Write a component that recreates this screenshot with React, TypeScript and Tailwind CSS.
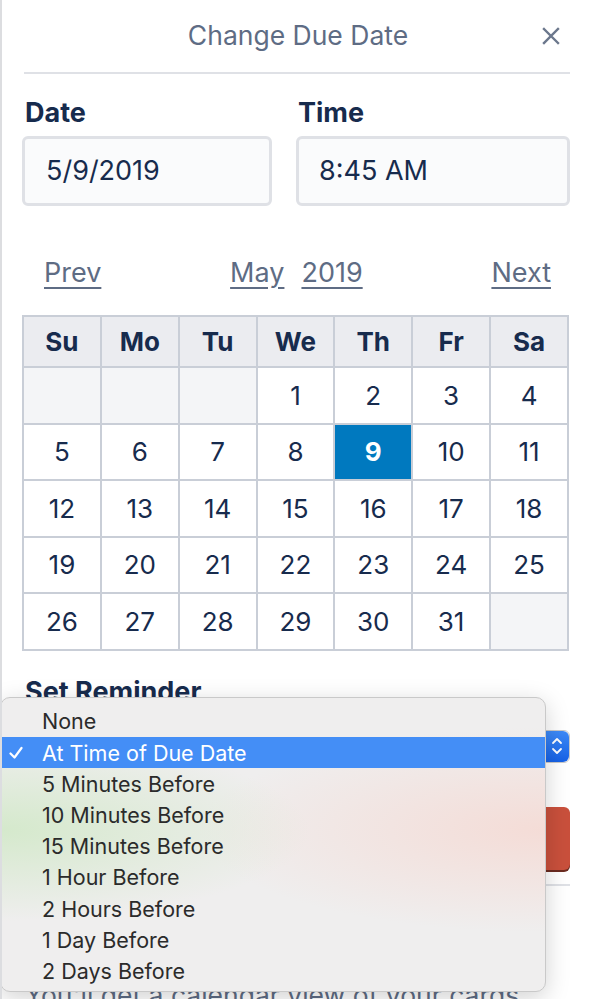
import React from "react";

const weeks: (number | null)[][] = [
  [null, null, null, 1, 2, 3, 4],
  [5, 6, 7, 8, 9, 10, 11],
  [12, 13, 14, 15, 16, 17, 18],
  [19, 20, 21, 22, 23, 24, 25],
  [26, 27, 28, 29, 30, 31, null],
];

const days = ["Su", "Mo", "Tu", "We", "Th", "Fr", "Sa"];

const options = [
  "None",
  "At Time of Due Date",
  "5 Minutes Before",
  "10 Minutes Before",
  "15 Minutes Before",
  "1 Hour Before",
  "2 Hours Before",
  "1 Day Before",
  "2 Days Before",
];

export default function App() {
  return (
    <div
      className="relative w-[592px] h-[999px] overflow-hidden bg-white border-l-2 border-[#dcdde0]"
      style={{ fontFamily: "Inter, 'Noto Sans', sans-serif" }}
    >
      <div className="pl-[20px] pr-[22px]">
        {/* Header */}
        <div className="grid grid-cols-[1fr_auto_1fr] items-center h-[74px] border-b-2 border-[#dfe1e6] ml-[2px]">
          <div />
          <div className="text-[26.5px] text-[#5e6c84] pl-[2px]">Change Due Date</div>
          <div className="flex justify-end pr-[10px]">
            <svg width="18" height="18" viewBox="0 0 18 18">
              <path d="M2 2 L16 16 M16 2 L2 16" stroke="#6b778c" strokeWidth="2.4" strokeLinecap="square" />
            </svg>
          </div>
        </div>

        {/* Date/Time */}
        <div className="grid grid-cols-[250px_1fr] gap-[24px] mt-[24px]">
          <div>
            <div className="text-[27px] font-bold text-[#172b4d] leading-[30px] pl-[3px]">Date</div>
            <div className="mt-[8px] h-[70px] rounded-[6px] border-[3px] border-[#dfe1e6] bg-[#fafbfc] flex items-center pl-[21px] text-[27px] text-[#172b4d]">
              5/9/2019
            </div>
          </div>
          <div>
            <div className="text-[27px] font-bold text-[#172b4d] leading-[30px] pl-[2px]">Time</div>
            <div className="mt-[8px] h-[70px] rounded-[6px] border-[3px] border-[#dfe1e6] bg-[#fafbfc] flex items-center pl-[20px] text-[27px] text-[#172b4d]">
              8:45 AM
            </div>
          </div>
        </div>

        {/* Month nav */}
        <div className="mt-[52px] flex items-center justify-between pl-[22px] pr-[19px] h-[30px] text-[27px] text-[#5e6c84]">
          <span className="underline underline-offset-[5px]">Prev</span>
          <span className="flex gap-[17px]">
            <span className="underline underline-offset-[5px]">May</span>
            <span className="underline underline-offset-[5px]">2019</span>
          </span>
          <span className="underline underline-offset-[5px]">Next</span>
        </div>

        {/* Calendar */}
        <table className="mt-[27px] w-[547px] border-collapse table-fixed text-[#172b4d]">
          <thead>
            <tr>
              {days.map((d) => (
                <th
                  key={d}
                  className="h-[51px] border-2 border-[#c9ced7] bg-[#ebecf0] text-[26px] font-bold text-center"
                >
                  {d}
                </th>
              ))}
            </tr>
          </thead>
          <tbody>
            {weeks.map((w, i) => (
              <tr key={i}>
                {w.map((d, j) => (
                  <td
                    key={j}
                    className={
                      "h-[56.5px] border-2 border-[#c9ced7] text-center text-[26px] " +
                      (d === null
                        ? "bg-[#f4f5f7]"
                        : d === 9
                        ? "bg-[#0079bf] text-white font-bold"
                        : "bg-white")
                    }
                  >
                    {d ?? ""}
                  </td>
                ))}
              </tr>
            ))}
          </tbody>
        </table>

        {/* Reminder */}
        <div className="mt-[26px] text-[27px] font-bold text-[#172b4d] leading-[30px] pl-[3px]">Set Reminder</div>
        <div className="mt-[23px] h-[33px] flex rounded-[6px] border border-[#c8c8c8] bg-white ml-[2px]">
          <div className="flex-1 pl-[16px] flex items-center text-[18px] text-[#222]">At Time of Due Date</div>
          <div className="w-[24px] h-full rounded-r-[6px] bg-gradient-to-b from-[#3d8af7] to-[#1661e6] flex items-center justify-center">
            <svg width="12" height="22" viewBox="0 0 12 22">
              <path d="M2 8 L6 4 L10 8 M2 14 L6 18 L10 14" stroke="white" strokeWidth="1.8" fill="none" strokeLinecap="round" strokeLinejoin="round" />
            </svg>
          </div>
        </div>

        {/* Buttons */}
        <div className="mt-[44px] flex justify-between ml-[2px]">
          <div className="h-[63px] w-[130px] rounded-[6px] bg-[#5aac44] shadow-[0_2px_0_#3f6f21] text-white text-[24px] font-bold flex items-center justify-center">
            Save
          </div>
          <div className="h-[63px] w-[150px] rounded-[6px] bg-[#c9503c] shadow-[0_2px_0_#6b2b20] text-white text-[24px] font-bold flex items-center justify-center">
            Remove
          </div>
        </div>

        <div className="mt-[14px] border-b-2 border-[#dfe1e6] ml-[2px]" />

        <div className="mt-[90px] text-[26.5px] text-[#5e6c84] pl-[3px]">You'll get a calendar view of your cards</div>
      </div>

      {/* Native dropdown menu overlay */}
      <div
        className="absolute left-[-2px] top-[697px] w-[546px] h-[295px] rounded-[10px] border border-[#c9c9c9] shadow-[0_6px_24px_rgba(0,0,0,0.18)] pt-[8px] bg-[#efeeee] bg-[radial-gradient(ellipse_at_0%_45%,rgba(208,232,198,0.85),transparent_40%),radial-gradient(ellipse_at_100%_45%,rgba(245,218,212,0.9),transparent_45%)]"
        style={{ fontFamily: "Inter, 'Noto Sans', sans-serif" }}
      >
        {options.map((o, i) => (
          <div
            key={o}
            className={
              "relative h-[31.2px] flex items-center pl-[41px] text-[21.5px] " +
              (i === 1 ? "bg-[#448ef6] text-white" : "text-[#2b2b2b]")
            }
          >
            {i === 1 && (
              <svg className="absolute left-[8px]" width="14" height="14" viewBox="0 0 14 14">
                <path d="M1.5 7.5 L5.5 11.5 L12.5 2" stroke="white" strokeWidth="2.2" fill="none" strokeLinecap="round" strokeLinejoin="round" />
              </svg>
            )}
            {o}
          </div>
        ))}
      </div>
    </div>
  );
}
